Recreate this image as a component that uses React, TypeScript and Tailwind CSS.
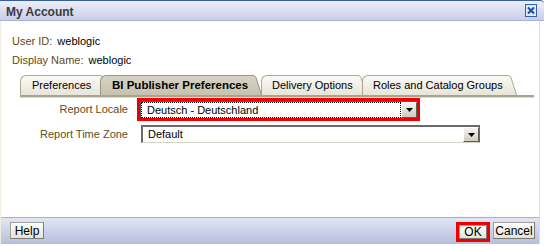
import React from "react";

type TabInfo = {
  label: string;
  selected: boolean;
  wrap: string;
  body: string;
};

const tabs: TabInfo[] = [
  { label: "Preferences", selected: false, wrap: "ml-0", body: "w-[77px] pl-[11px]" },
  { label: "BI Publisher Preferences", selected: true, wrap: "-ml-[9px] z-10", body: "w-[150px] pl-[11px]" },
  { label: "Delivery Options", selected: false, wrap: "-ml-[1px]", body: "w-[94px] pl-[10px]" },
  { label: "Roles and Catalog Groups", selected: false, wrap: "-ml-[5px]", body: "w-[143px] pl-[10px]" },
];

const TabSlant = ({ selected }: { selected: boolean }) => {
  const id = selected ? "tabSel" : "tabUn";
  return (
    <svg width="12" height="20" viewBox="0 0 12 20" className="block shrink-0">
      <defs>
        <linearGradient id={id} x1="0" y1="0" x2="0" y2="1">
          <stop offset="0" stopColor={selected ? "#d7d3c4" : "#fbfaf6"} />
          <stop offset="1" stopColor={selected ? "#c7c2af" : "#e7e4d8"} />
        </linearGradient>
      </defs>
      <path d="M0 0.5 H3 Q5 0.5 6 2.5 L12 20 H0 Z" fill={`url(#${id})`} />
      <path d="M0 0.5 H3 Q5 0.5 6 2.5 L11.5 20" fill="none" stroke={selected ? "#9c9781" : "#aea891"} strokeWidth="1" />
    </svg>
  );
};

const Tab = ({ t }: { t: TabInfo }) => (
  <div className={`relative flex h-[20px] ${t.wrap}`}>
    <div
      className={`flex items-center h-full rounded-tl-[6px] border-l border-t ${t.body} ${
        t.selected
          ? "bg-gradient-to-b from-[#d7d3c4] to-[#c7c2af] border-[#9c9781] font-bold text-[11.5px]"
          : "bg-gradient-to-b from-[#fbfaf6] to-[#e7e4d8] border-[#aea891] text-[11px]"
      } text-black whitespace-nowrap`}
    >
      {t.label}
    </div>
    <TabSlant selected={t.selected} />
  </div>
);

const DropArrow = () => (
  <div className="w-[16px] h-full flex items-center justify-center bg-gradient-to-b from-[#f4f3ee] to-[#cfccc1] border border-t-white border-l-white border-r-[#5e5e5e] border-b-[#5e5e5e]">
    <svg width="7" height="4" viewBox="0 0 7 4" className="block">
      <path d="M0 0 H7 L3.5 4 Z" fill="#000" />
    </svg>
  </div>
);

const CloseIcon = () => (
  <svg width="12" height="13" viewBox="0 0 12 13" className="block">
    <rect x="0.5" y="0.5" width="11" height="12" fill="#dfe8f7" stroke="#3463ad" />
    <path d="M3 3.5 L9 9.5 M9 3.5 L3 9.5" stroke="#1e4f9c" strokeWidth="2" />
  </svg>
);

const FooterButton = ({ label, className }: { label: string; className: string }) => (
  <button
    type="button"
    className={`flex items-center justify-center text-[12px] text-black bg-gradient-to-b from-[#fdfdfa] to-[#e4e2d8] border border-[#a19e93] border-r-[#7d7b74] border-b-[#7d7b74] ${className}`}
  >
    {label}
  </button>
);

export default function App() {
  return (
    <div className="w-[544px] h-[246px] flex flex-col bg-white font-['Liberation_Sans',Arial,sans-serif] overflow-hidden">
      {/* title bar */}
      <div className="h-[21px] shrink-0 flex items-center justify-between border-t border-[#3a5f9c] border-b border-b-[#a9b2d3] rounded-tr-[4px] bg-gradient-to-b from-[#eceef9] to-[#c9cee7] pl-[6px] pr-[7px]">
        <span className="text-[12px] font-bold text-[#3b3b3b] pt-[2px]">My Account</span>
        <CloseIcon />
      </div>

      <div className="flex-1 flex flex-col mr-[4px] border-r border-l border-r-[#dcdcdc] border-l-[#efece0]">
        {/* body */}
        <div className="flex-1 flex flex-col">
          <div className="pl-[11px] pt-[11px] text-[11px]">
            <div className="h-[19px] flex items-center">
              <span className="text-[#5f4c18]">User ID:</span>
              <span className="ml-[5px] text-black">weblogic</span>
            </div>
            <div className="h-[19px] flex items-center">
              <span className="text-[#5f4c18]">Display Name:</span>
              <span className="ml-[5px] text-black">weblogic</span>
            </div>
          </div>

          <div className="mt-[5px] pl-[19px] flex">
            {tabs.map((t) => (
              <Tab key={t.label} t={t} />
            ))}
          </div>
          <div className="ml-[19px] w-[514px] h-[2px] bg-[#aaa48c]" />
          <div className="ml-[19px] w-[514px] h-[1px] bg-[#dedbcd]" />

          {/* form */}
          <div className="text-[11px]">
            <div className="h-[23px] flex items-center">
              <span className="w-[127px] text-right text-[#5f4c18]">Report Locale</span>
              <div className="ml-[9px] w-[283px] h-[23px] border-[3px] border-[#ee0000]">
                <div className="h-full flex bg-white border-t border-l border-[#5a5a5a]">
                  <div className="flex-1 flex items-center border border-dotted border-black pl-[5px] text-black">
                    Deutsch - Deutschland
                  </div>
                  <DropArrow />
                </div>
              </div>
            </div>
            <div className="mt-[4px] h-[18px] flex items-center">
              <span className="w-[127px] text-right text-[#5f4c18]">Report Time Zone</span>
              <div className="ml-[13px] w-[339px] h-[18px] flex bg-white border-t-2 border-l-2 border-r border-[#6a6a6a] border-b border-b-[#d6d3c9]">
                <div className="flex-1 flex items-center pl-[5px] text-black">Default</div>
                <DropArrow />
              </div>
            </div>
          </div>
        </div>

        {/* footer */}
        <div className="h-[27px] shrink-0 flex items-start justify-between border-t border-[#a7afcc] bg-gradient-to-b from-[#e1e6f7] to-[#b8bed9] pt-[4px] pl-[9px] pr-[4px]">
          <FooterButton label="Help" className="w-[34px] h-[17px]" />
          <div className="flex items-start gap-[3px]">
            <div className="w-[34px] h-[20px] border-[3px] border-[#ee0000]">
              <FooterButton label="OK" className="w-full h-full" />
            </div>
            <FooterButton label="Cancel" className="w-[42px] h-[17px]" />
          </div>
        </div>
      </div>
      <div className="h-[2px] shrink-0" />
    </div>
  );
}
